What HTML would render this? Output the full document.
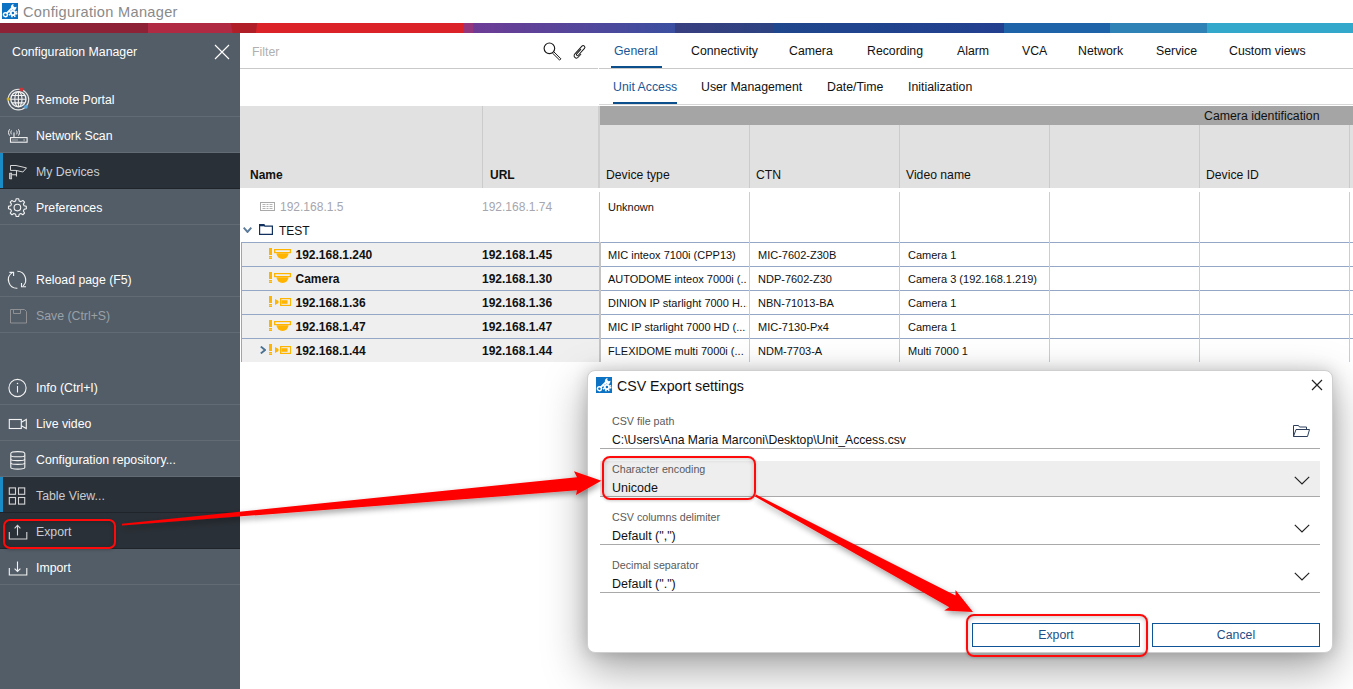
<!DOCTYPE html>
<html><head><meta charset="utf-8">
<style>
*{margin:0;padding:0;box-sizing:border-box}
html,body{width:1353px;height:689px;overflow:hidden;background:#fff;font-family:"Liberation Sans",sans-serif;position:relative}
.a{position:absolute;white-space:nowrap}
.t{position:absolute;white-space:nowrap;line-height:1}
/* sidebar */
#sb{position:absolute;left:0;top:33px;width:240px;height:656px;background:#535d67}
.row{position:absolute;left:0;width:240px;height:36px}
.row.sep{border-bottom:1px solid #626b74}
.row.sel{background:#2a3037;border-bottom:1px solid #1f242a}
.row.acc::before{content:"";position:absolute;left:0;top:0;width:3px;height:100%;background:#1b8bc6}
.row .lbl{position:absolute;left:36px;top:12px;font-size:12.3px;color:#fff;line-height:14px}
.row.sel .lbl{color:#c9cdd1}
.row .ic{position:absolute;left:6px;top:6px;width:24px;height:24px}
.tab{position:absolute;top:44px;font-size:12.3px;color:#111;line-height:14px}
.stab{position:absolute;top:80px;font-size:12.3px;color:#111;line-height:14px}
.hl{position:absolute;background:#c9c9c9;height:1px}
.hdr{position:absolute;font-size:12px;color:#111;line-height:14px}
.cell{position:absolute;font-size:11px;color:#111;line-height:13px}
</style></head><body>

<!-- title bar -->
<svg class="a" style="left:2px;top:3px" width="16" height="16" viewBox="0 0 16 16">
<rect width="16" height="16" fill="#0b72c4"/>
<path d="M4.6 10.3 L10.6 4.4" stroke="#fff" stroke-width="1.7"/>
<circle cx="3.4" cy="11.7" r="2" fill="none" stroke="#fff" stroke-width="1.4"/>
<path d="M9.4 5.6 A2.8 2.8 0 0 1 11.6 1.1 L11.2 2.9 L12.7 4.3 L14.5 3.8 A2.8 2.8 0 0 1 10.4 6.6z" fill="#fff"/>
<circle cx="10.9" cy="10" r="3.1" fill="#fff"/>
<circle cx="10.9" cy="10" r="3.8" fill="none" stroke="#fff" stroke-width="1.5" stroke-dasharray="1.5 1.56"/>
<circle cx="10.9" cy="10" r="1.2" fill="#0b72c4"/>
</svg>
<div class="t" style="left:23px;top:5px;font-size:14.6px;letter-spacing:.3px;color:#8a8a8a">Configuration Manager</div>

<!-- color bar -->
<svg class="a" style="left:0;top:23px" width="1353" height="10">
<defs>
<linearGradient id="g1" x1="0" x2="1"><stop offset="0" stop-color="#6d3c95"/><stop offset="1" stop-color="#3b4fa0"/></linearGradient>
<linearGradient id="g2" x1="0" x2="1"><stop offset="0" stop-color="#383f80"/><stop offset="1" stop-color="#2d4281"/></linearGradient><linearGradient id="g3" x1="0" x2="1"><stop offset="0" stop-color="#1f478d"/><stop offset="1" stop-color="#223f8f"/></linearGradient>
</defs>
<rect x="0" y="0" width="148" height="10" fill="#8d2136"/>
<rect x="148" y="0" width="86" height="10" fill="#b02a44"/>
<rect x="250" y="0" width="213" height="10" fill="#dc2229"/>
<polygon points="230.8,0 257.2,0 255.9,10 232.5,10" fill="#b01f28"/>
<rect x="463" y="0" width="10" height="10" fill="#93367e"/>
<rect x="473" y="0" width="202" height="10" fill="url(#g1)"/>
<rect x="675" y="0" width="99" height="10" fill="url(#g2)"/><rect x="774" y="0" width="230" height="10" fill="url(#g3)"/>
<rect x="1004" y="0" width="106" height="10" fill="#1e63a8"/>
<rect x="1110" y="0" width="97" height="10" fill="#2e82b6"/>
<rect x="1207" y="0" width="146" height="10" fill="#34a8ca"/>
</svg>

<!-- sidebar -->
<div id="sb">
  <div class="t" style="left:12px;top:13px;font-size:12.3px;color:#fff">Configuration Manager</div>
  <svg class="a" style="left:213.5px;top:11px" width="16" height="16"><path d="M1 1 L15 15 M15 1 L1 15" stroke="#fff" stroke-width="1.15"/></svg>

  <div class="row sep" style="top:48px"><svg class="ic" viewBox="0 0 24 24"><circle cx="12.4" cy="12.6" r="10.3" fill="none" stroke="#e6e6e6" stroke-width="1.1"/><circle cx="12.4" cy="12.2" r="7.6" fill="none" stroke="#f2f2f2" stroke-width="1.3"/><path d="M4.8 12.2h15.2M12.4 4.6v15.2M5.8 8.5h13.2M5.8 15.9h13.2" stroke="#f2f2f2" stroke-width="1.1"/><ellipse cx="12.4" cy="12.2" rx="3.6" ry="7.6" fill="none" stroke="#f2f2f2" stroke-width="1.1"/><circle cx="15.5" cy="2.6" r="2" fill="#c8363a"/><circle cx="2.3" cy="12.1" r="1.7" fill="#cfae1c"/><circle cx="19.9" cy="19.8" r="1.9" fill="#58a6dc"/></svg><div class="lbl">Remote Portal</div></div>
  <div class="row sep" style="top:84px"><svg class="ic" viewBox="0 0 24 24"><rect x="4.5" y="14.6" width="16.6" height="4.6" fill="none" stroke="#f2f2f2" stroke-width="1.1"/><path d="M6.5 17h1M8.5 17h1M10.5 17h1M17.5 17h1.2" stroke="#f2f2f2" stroke-width="1"/><path d="M8 14V9.5" stroke="#f2f2f2" stroke-width="1.1"/><path d="M5.5 7.5c-.8 1.2-.8 2.6 0 3.8M10.5 7.5c.8 1.2.8 2.6 0 3.8M3.6 6.3c-1.4 2-1.4 4.3 0 6.3M12.4 6.3c1.4 2 1.4 4.3 0 6.3" fill="none" stroke="#f2f2f2" stroke-width="1"/></svg><div class="lbl">Network Scan</div></div>
  <div class="row sel acc" style="top:120px"><svg class="ic" viewBox="0 0 24 24"><path d="M4.5 6.5h5.5l10.5 2.4-3.6 4.1-6.9-1.6H4.5z" fill="none" stroke="#d4d6d8" stroke-width="1"/><path d="M10.5 11.6v6M5.5 15.8h5M3.8 14v6" fill="none" stroke="#d4d6d8" stroke-width="1.1"/><rect x="4" y="14.2" width="1.6" height="5.6" fill="none" stroke="#d4d6d8" stroke-width=".9"/></svg><div class="lbl">My Devices</div></div>
  <div class="row sep" style="top:156px"><svg class="ic" viewBox="0 0 24 24"><path transform="translate(-.6 .6)" d="M10.80 3.08 L13.20 3.08 L13.77 5.33 L15.47 6.03 L17.46 4.85 L19.15 6.54 L17.97 8.53 L18.67 10.23 L20.92 10.80 L20.92 13.20 L18.67 13.77 L17.97 15.47 L19.15 17.46 L17.46 19.15 L15.47 17.97 L13.77 18.67 L13.20 20.92 L10.80 20.92 L10.23 18.67 L8.53 17.97 L6.54 19.15 L4.85 17.46 L6.03 15.47 L5.33 13.77 L3.08 13.20 L3.08 10.80 L5.33 10.23 L6.03 8.53 L4.85 6.54 L6.54 4.85 L8.53 6.03 L10.23 5.33z" fill="none" stroke="#f2f2f2" stroke-width="1.1" stroke-linejoin="round"/><circle cx="11.4" cy="12.6" r="3.3" fill="none" stroke="#f2f2f2" stroke-width="1.1"/></svg><div class="lbl">Preferences</div></div>

  <div class="row sep" style="top:228px"><svg class="ic" viewBox="0 0 24 24"><path d="M6.3 5.6A8.5 8.5 0 0 0 11.4 21.2M11.4 4.3A8.5 8.5 0 0 1 17.1 18.9" fill="none" stroke="#f2f2f2" stroke-width="1.1"/><path d="M3.4 5.4H7.6V8.9M15.5 16V19.7H20" fill="none" stroke="#f2f2f2" stroke-width="1.1"/></svg><div class="lbl">Reload page (F5)</div></div>
  <div class="row sep" style="top:264px"><svg class="ic" viewBox="0 0 24 24"><path d="M4.5 6.5h14l2 2v11.5h-16z" fill="none" stroke="#8e9094" stroke-width="1"/><path d="M7.5 6.5v4h7v-4" fill="none" stroke="#8e9094" stroke-width="1"/></svg><div class="lbl" style="color:#9aa1a8">Save (Ctrl+S)</div></div>

  <div class="row sep" style="top:336px"><svg class="ic" viewBox="0 0 24 24"><circle cx="11.5" cy="13" r="8.6" fill="none" stroke="#f2f2f2" stroke-width="1.1"/><path d="M11.5 11v6.5" stroke="#f2f2f2" stroke-width="1.1"/><circle cx="11.5" cy="8.6" r=".75" fill="#f2f2f2"/></svg><div class="lbl">Info (Ctrl+I)</div></div>
  <div class="row sep" style="top:372px"><svg class="ic" viewBox="0 0 24 24"><rect x="3.3" y="8.5" width="12" height="9" fill="none" stroke="#f2f2f2" stroke-width="1.1"/><path d="M15.3 11.2l5-2.7v9l-5-2.7" fill="none" stroke="#f2f2f2" stroke-width="1.1"/></svg><div class="lbl">Live video</div></div>
  <div class="row sep" style="top:408px"><svg class="ic" viewBox="0 0 24 24"><path d="M4.8 6.5c0-1.3 3-1.9 7-1.9s7 .6 7 1.9v14c0 1-3 1.6-7 1.6s-7-.6-7-1.6z" fill="none" stroke="#f2f2f2" stroke-width="1.1"/><path d="M4.8 8.4c0 .9 3 1.4 7 1.4s7-.5 7-1.4M4.8 12.2c0 .9 3 1.4 7 1.4s7-.5 7-1.4M4.8 16c0 .9 3 1.4 7 1.4s7-.5 7-1.4" fill="none" stroke="#f2f2f2" stroke-width="1.1"/></svg><div class="lbl">Configuration repository...</div></div>
  <div class="row sel acc" style="top:444px"><svg class="ic" viewBox="0 0 24 24"><rect x="3.3" y="4.9" width="6.2" height="6.4" fill="none" stroke="#d4d6d8" stroke-width="1.1"/><rect x="12.5" y="4.9" width="6.2" height="6.4" fill="none" stroke="#d4d6d8" stroke-width="1.1"/><rect x="3.3" y="14.5" width="6.2" height="6.6" fill="none" stroke="#d4d6d8" stroke-width="1.1"/><rect x="12.5" y="14.5" width="6.2" height="6.6" fill="none" stroke="#d4d6d8" stroke-width="1.1"/></svg><div class="lbl">Table View...</div></div>
  <div class="row sel" style="top:480px"><svg class="ic" viewBox="0 0 24 24"><path d="M3.3 18v7h17.5v-7" transform="translate(0 -5)" fill="none" stroke="#d4d6d8" stroke-width="1.1"/><path d="M11.5 6.5v10M8.6 9.3l2.9-2.9 2.9 2.9" fill="none" stroke="#d4d6d8" stroke-width="1.1"/></svg><div class="lbl">Export</div></div>
  <div class="row sep" style="top:516px"><svg class="ic" viewBox="0 0 24 24"><path d="M3.3 13v7h17.5v-7" fill="none" stroke="#f2f2f2" stroke-width="1.1"/><path d="M11.5 6.5v10M8.6 13.6l2.9 2.9 2.9-2.9" fill="none" stroke="#f2f2f2" stroke-width="1.1"/></svg><div class="lbl">Import</div></div>
</div>

<!-- toolbar -->
<div class="t" style="left:252px;top:46px;font-size:12.3px;color:#b0b0b0">Filter</div>
<svg class="a" style="left:540px;top:41px" width="50" height="22" viewBox="0 0 50 22">
<circle cx="9.4" cy="7.3" r="5.3" fill="none" stroke="#1a1a1a" stroke-width="1.15"/>
<path d="M13.6 10.6 L20.9 17.8 L19.6 19.1 L12.3 11.9" fill="none" stroke="#1a1a1a" stroke-width="1"/>
<path transform="translate(39.6 10.6) rotate(42)" d="M-0.6 -2.8 V3.6 A1.05 1.05 0 0 0 1.5 3.6 V-5.6 A1.7 1.7 0 0 0 -1.9 -5.6 V5.2 A2.3 2.3 0 0 0 2.7 5.2 V0.8" fill="none" stroke="#1a1a1a" stroke-width="1"/>
</svg>
<div class="hl" style="left:240px;top:68px;width:358px"></div>
<div class="hl" style="left:599px;top:68px;width:754px"></div>

<div class="tab" style="left:614px;color:#1a5796">General</div>
<div class="a" style="left:611px;top:66px;width:51px;height:2px;background:#0c4f8d"></div>
<div class="tab" style="left:691px">Connectivity</div>
<div class="tab" style="left:789px">Camera</div>
<div class="tab" style="left:867px">Recording</div>
<div class="tab" style="left:957px">Alarm</div>
<div class="tab" style="left:1022px">VCA</div>
<div class="tab" style="left:1078px">Network</div>
<div class="tab" style="left:1156px">Service</div>
<div class="tab" style="left:1229px">Custom views</div>

<div class="stab" style="left:613px;color:#1a5796">Unit Access</div>
<div class="a" style="left:613px;top:102px;width:64px;height:2px;background:#0c4f8d"></div>
<div class="stab" style="left:701px">User Management</div>
<div class="stab" style="left:827px">Date/Time</div>
<div class="stab" style="left:908px">Initialization</div>
<div class="hl" style="left:599px;top:104px;width:754px;background:#d6d6d6"></div>

<!-- table header -->
<div class="a" style="left:240px;top:106px;width:359px;height:82px;background:#e1e1e1"></div>
<div class="a" style="left:482px;top:106px;width:1px;height:82px;background:#cbcbcb"></div>
<div class="a" style="left:598px;top:106px;width:2px;height:82px;background:#cfcfcf"></div>
<div class="a" style="left:600px;top:106px;width:753px;height:19px;background:#a5a5a5"></div>
<div class="a" style="left:600px;top:125px;width:753px;height:63px;background:#e1e1e1"></div>
<div class="a" style="left:749px;top:125px;width:1px;height:63px;background:#cbcbcb"></div>
<div class="a" style="left:899px;top:125px;width:1px;height:63px;background:#cbcbcb"></div>
<div class="a" style="left:1049px;top:125px;width:1px;height:63px;background:#cbcbcb"></div>
<div class="a" style="left:1199px;top:125px;width:1px;height:63px;background:#cbcbcb"></div>
<div class="a" style="left:1349px;top:125px;width:1px;height:63px;background:#cbcbcb"></div>
<div class="hdr" style="left:1204px;top:109px;font-size:12.3px">Camera identification</div>
<div class="hdr" style="left:250px;top:168px;font-weight:bold">Name</div>
<div class="hdr" style="left:490px;top:168px;font-weight:bold">URL</div>
<div class="hdr" style="left:606px;top:168px;font-size:12.2px">Device type</div>
<div class="hdr" style="left:756px;top:168px;font-size:12.2px">CTN</div>
<div class="hdr" style="left:906px;top:168px;font-size:12.2px">Video name</div>
<div class="hdr" style="left:1206px;top:168px;font-size:12.2px">Device ID</div>

<!-- table body -->
<div id="tbody">
<svg class="a" style="left:260px;top:202px" width="15" height="9" viewBox="0 0 15 9"><rect x=".5" y=".5" width="14" height="8" fill="none" stroke="#a9a9a9"/><path d="M2.5 2.5h3M6.5 2.5h2M9.5 2.5h3M2.5 4.5h3M6.5 4.5h2M9.5 4.5h3M2.5 6.5h3M6.5 6.5h2M9.5 6.5h3" stroke="#b5b5b5"/></svg>
<div class="t" style="left:280px;top:201px;font-size:12px;color:#a6a6ae">192.168.1.5</div>
<div class="t" style="left:482px;top:201px;font-size:12px;color:#a6a6ae">192.168.1.74</div>
<div class="t" style="left:608px;top:202px;font-size:11px;color:#111">Unknown</div>
<div class="a" style="left:599px;top:192px;width:1px;height:50px;background:#cdcdcd"></div>
<div class="a" style="left:749px;top:192px;width:1px;height:50px;background:#cdcdcd"></div>
<div class="a" style="left:899px;top:192px;width:1px;height:50px;background:#cdcdcd"></div>
<div class="a" style="left:1049px;top:192px;width:1px;height:50px;background:#cdcdcd"></div>
<div class="a" style="left:1199px;top:192px;width:1px;height:50px;background:#cdcdcd"></div>
<div class="a" style="left:1349px;top:192px;width:1px;height:50px;background:#cdcdcd"></div>
<svg class="a" style="left:243px;top:227px" width="9" height="6" viewBox="0 0 9 6"><path d="M.7 .7L4.5 5 8.3 .7" fill="none" stroke="#5b7b9b" stroke-width="1.9"/></svg>
<svg class="a" style="left:259px;top:224px" width="14" height="11" viewBox="0 0 14 11"><path d="M.6 10.4V.6h4.4l.8 1.6h7.6v8.2z" fill="none" stroke="#11305e" stroke-width="1.2"/><rect x=".6" y=".5" width="4.6" height="1.8" fill="#11305e"/></svg>
<div class="t" style="left:279px;top:225px;font-size:12px;color:#111">TEST</div>
<div class="a" style="left:241px;top:242px;width:358px;height:120px;background:#efefef;border-left:1px solid #93a6c6"></div>
<div class="a" style="left:241px;top:242px;width:1112px;height:1px;background:#94a7c6"></div>
<svg class="a" style="left:269px;top:248px" width="3" height="11" viewBox="0 0 3 11"><rect x="0" y="0" width="3" height="7" fill="#ffb400"/><rect x="0" y="8" width="3" height="1.4" fill="#ffb400"/><rect x="0" y="9.6" width="3" height="1.4" fill="#ffb400"/></svg>
<svg class="a" style="left:274px;top:249px" width="17" height="11" viewBox="0 0 17 11"><rect x=".6" y=".6" width="15.8" height="3" fill="none" stroke="#ffb400" stroke-width="1.2"/><path d="M2.5 4.2h12a6 5.8 0 0 1 -12 0z" fill="#ffb400"/></svg>
<div class="t" style="left:295.5px;top:249px;font-size:12px;font-weight:bold;color:#111">192.168.1.240</div>
<div class="t" style="left:482px;top:249px;font-size:12px;font-weight:bold;color:#111">192.168.1.45</div>
<div class="t" style="left:608px;top:250px;width:139px;overflow:hidden;font-size:11px;color:#111">MIC inteox 7100i (CPP13)</div>
<div class="t" style="left:758px;top:250px;font-size:11px;color:#111">MIC-7602-Z30B</div>
<div class="t" style="left:908px;top:250px;font-size:11px;color:#111">Camera 1</div>
<div class="a" style="left:241px;top:266px;width:1112px;height:1px;background:#94a7c6"></div>
<svg class="a" style="left:269px;top:272px" width="3" height="11" viewBox="0 0 3 11"><rect x="0" y="0" width="3" height="7" fill="#ffb400"/><rect x="0" y="8" width="3" height="1.4" fill="#ffb400"/><rect x="0" y="9.6" width="3" height="1.4" fill="#ffb400"/></svg>
<svg class="a" style="left:274px;top:273px" width="17" height="11" viewBox="0 0 17 11"><rect x=".6" y=".6" width="15.8" height="3" fill="none" stroke="#ffb400" stroke-width="1.2"/><path d="M2.5 4.2h12a6 5.8 0 0 1 -12 0z" fill="#ffb400"/></svg>
<div class="t" style="left:295.5px;top:273px;font-size:12px;font-weight:bold;color:#111">Camera</div>
<div class="t" style="left:482px;top:273px;font-size:12px;font-weight:bold;color:#111">192.168.1.30</div>
<div class="t" style="left:608px;top:274px;width:139px;overflow:hidden;font-size:11px;color:#111">AUTODOME inteox 7000i (...</div>
<div class="t" style="left:758px;top:274px;font-size:11px;color:#111">NDP-7602-Z30</div>
<div class="t" style="left:908px;top:274px;font-size:11px;color:#111">Camera 3 (192.168.1.219)</div>
<div class="a" style="left:241px;top:290px;width:1112px;height:1px;background:#94a7c6"></div>
<svg class="a" style="left:269px;top:296px" width="3" height="11" viewBox="0 0 3 11"><rect x="0" y="0" width="3" height="7" fill="#ffb400"/><rect x="0" y="8" width="3" height="1.4" fill="#ffb400"/><rect x="0" y="9.6" width="3" height="1.4" fill="#ffb400"/></svg>
<svg class="a" style="left:275px;top:298px" width="16" height="8" viewBox="0 0 16 8"><path d="M0 1l3.5 2v2L0 7z" fill="#ffb400"/><rect x="5.6" y=".6" width="10" height="6.8" fill="none" stroke="#ffb400" stroke-width="1.2"/><rect x="6.5" y="2.2" width="6" height="3.6" fill="#ffb400"/></svg>
<div class="t" style="left:295.5px;top:297px;font-size:12px;font-weight:bold;color:#111">192.168.1.36</div>
<div class="t" style="left:482px;top:297px;font-size:12px;font-weight:bold;color:#111">192.168.1.36</div>
<div class="t" style="left:608px;top:298px;width:139px;overflow:hidden;font-size:11px;color:#111">DINION IP starlight 7000 H...</div>
<div class="t" style="left:758px;top:298px;font-size:11px;color:#111">NBN-71013-BA</div>
<div class="t" style="left:908px;top:298px;font-size:11px;color:#111">Camera 1</div>
<div class="a" style="left:241px;top:314px;width:1112px;height:1px;background:#94a7c6"></div>
<svg class="a" style="left:269px;top:320px" width="3" height="11" viewBox="0 0 3 11"><rect x="0" y="0" width="3" height="7" fill="#ffb400"/><rect x="0" y="8" width="3" height="1.4" fill="#ffb400"/><rect x="0" y="9.6" width="3" height="1.4" fill="#ffb400"/></svg>
<svg class="a" style="left:274px;top:321px" width="17" height="11" viewBox="0 0 17 11"><rect x=".6" y=".6" width="15.8" height="3" fill="none" stroke="#ffb400" stroke-width="1.2"/><path d="M2.5 4.2h12a6 5.8 0 0 1 -12 0z" fill="#ffb400"/></svg>
<div class="t" style="left:295.5px;top:321px;font-size:12px;font-weight:bold;color:#111">192.168.1.47</div>
<div class="t" style="left:482px;top:321px;font-size:12px;font-weight:bold;color:#111">192.168.1.47</div>
<div class="t" style="left:608px;top:322px;width:139px;overflow:hidden;font-size:11px;color:#111">MIC IP starlight 7000 HD (...</div>
<div class="t" style="left:758px;top:322px;font-size:11px;color:#111">MIC-7130-Px4</div>
<div class="t" style="left:908px;top:322px;font-size:11px;color:#111">Camera 1</div>
<div class="a" style="left:241px;top:338px;width:1112px;height:1px;background:#94a7c6"></div>
<svg class="a" style="left:269px;top:344px" width="3" height="11" viewBox="0 0 3 11"><rect x="0" y="0" width="3" height="7" fill="#ffb400"/><rect x="0" y="8" width="3" height="1.4" fill="#ffb400"/><rect x="0" y="9.6" width="3" height="1.4" fill="#ffb400"/></svg>
<svg class="a" style="left:275px;top:346px" width="16" height="8" viewBox="0 0 16 8"><path d="M0 1l3.5 2v2L0 7z" fill="#ffb400"/><rect x="5.6" y=".6" width="10" height="6.8" fill="none" stroke="#ffb400" stroke-width="1.2"/><rect x="6.5" y="2.2" width="6" height="3.6" fill="#ffb400"/></svg>
<svg class="a" style="left:260px;top:346px" width="6" height="8" viewBox="0 0 6 8"><path d="M.8 .6L5 4 .8 7.4" fill="none" stroke="#4b7190" stroke-width="1.9"/></svg>
<div class="t" style="left:295.5px;top:345px;font-size:12px;font-weight:bold;color:#111">192.168.1.44</div>
<div class="t" style="left:482px;top:345px;font-size:12px;font-weight:bold;color:#111">192.168.1.44</div>
<div class="t" style="left:608px;top:346px;width:139px;overflow:hidden;font-size:11px;color:#111">FLEXIDOME multi 7000i (...</div>
<div class="t" style="left:758px;top:346px;font-size:11px;color:#111">NDM-7703-A</div>
<div class="t" style="left:908px;top:346px;font-size:11px;color:#111">Multi 7000 1</div>
<div class="a" style="left:749px;top:242px;width:1px;height:120px;background:#c9ced6"></div>
<div class="a" style="left:899px;top:242px;width:1px;height:120px;background:#c9ced6"></div>
<div class="a" style="left:1049px;top:242px;width:1px;height:120px;background:#c9ced6"></div>
<div class="a" style="left:1199px;top:242px;width:1px;height:120px;background:#c9ced6"></div>
<div class="a" style="left:1349px;top:242px;width:1px;height:120px;background:#c9ced6"></div>
<div class="a" style="left:599px;top:242px;width:2px;height:120px;background:#c4c4c4"></div>

</div>

<!-- dialog -->
<div class="a" style="left:587px;top:370px;width:746px;height:283px;background:#fff;border:1px solid #cfcfcf;border-radius:8px;box-shadow:0 16px 44px rgba(0,0,0,.36),0 0 16px rgba(0,0,0,.16)"></div>
<svg class="a" style="left:596px;top:377px" width="16" height="16" viewBox="0 0 16 16">
<rect width="16" height="16" fill="#0b72c4"/>
<path d="M4.6 10.3 L10.6 4.4" stroke="#fff" stroke-width="1.7"/>
<circle cx="3.4" cy="11.7" r="2" fill="none" stroke="#fff" stroke-width="1.4"/>
<path d="M9.4 5.6 A2.8 2.8 0 0 1 11.6 1.1 L11.2 2.9 L12.7 4.3 L14.5 3.8 A2.8 2.8 0 0 1 10.4 6.6z" fill="#fff"/>
<circle cx="10.9" cy="10" r="3.1" fill="#fff"/>
<circle cx="10.9" cy="10" r="3.8" fill="none" stroke="#fff" stroke-width="1.5" stroke-dasharray="1.5 1.56"/>
<circle cx="10.9" cy="10" r="1.2" fill="#0b72c4"/>
</svg>
<div class="t" style="left:617px;top:379px;font-size:14.2px;color:#111">CSV Export settings</div>
<svg class="a" style="left:1311px;top:379px" width="12" height="12" viewBox="0 0 12 12"><path d="M1 1L11 11M11 1L1 11" stroke="#222" stroke-width="1.2"/></svg>

<div class="t" style="left:612px;top:416px;font-size:10.7px;color:#5a5a5a">CSV file path</div>
<div class="t" style="left:612px;top:434px;font-size:12.2px;color:#111">C:\Users\Ana Maria Marconi\Desktop\Unit_Access.csv</div>
<div class="a" style="left:600px;top:448px;width:720px;height:1px;background:#a9a9a9"></div>
<svg class="a" style="left:1292px;top:424px" width="19" height="14" viewBox="0 0 19 14"><path d="M1.5 12.5V1.5h5l1 1.5h7v2.5M1.5 12.5h14l2-7H4z" fill="none" stroke="#2c3e5c" stroke-width="1"/></svg>

<div class="a" style="left:600px;top:461px;width:720px;height:36px;background:#eeeeee;border-bottom:1px solid #a9a9a9"></div>
<div class="t" style="left:612px;top:464px;font-size:10.7px;color:#5a5a5a">Character encoding</div>
<div class="t" style="left:612px;top:482px;font-size:12.5px;color:#111">Unicode</div>
<svg class="a" style="left:1294px;top:476px" width="16" height="9" viewBox="0 0 16 9"><path d="M.8 .8L8 8 15.2 .8" fill="none" stroke="#222" stroke-width="1.2"/></svg>

<div class="t" style="left:612px;top:512px;font-size:10.7px;color:#5a5a5a">CSV columns delimiter</div>
<div class="t" style="left:612px;top:530px;font-size:12.5px;color:#111">Default (",")</div>
<div class="a" style="left:600px;top:544px;width:720px;height:1px;background:#a9a9a9"></div>
<svg class="a" style="left:1294px;top:524px" width="16" height="9" viewBox="0 0 16 9"><path d="M.8 .8L8 8 15.2 .8" fill="none" stroke="#222" stroke-width="1.2"/></svg>

<div class="t" style="left:612px;top:560px;font-size:10.7px;color:#5a5a5a">Decimal separator</div>
<div class="t" style="left:612px;top:578px;font-size:12.5px;color:#111">Default (".")</div>
<div class="a" style="left:600px;top:592px;width:720px;height:1px;background:#a9a9a9"></div>
<svg class="a" style="left:1294px;top:572px" width="16" height="9" viewBox="0 0 16 9"><path d="M.8 .8L8 8 15.2 .8" fill="none" stroke="#222" stroke-width="1.2"/></svg>

<div class="a" style="left:972px;top:623px;width:168px;height:24px;border:1px solid #0f5496;background:#fff"></div>
<div class="t" style="left:972px;top:629px;width:168px;text-align:center;font-size:12.3px;color:#1f4f86">Export</div>
<div class="a" style="left:1152px;top:623px;width:168px;height:24px;border:1px solid #0f5496;background:#fff"></div>
<div class="t" style="left:1152px;top:629px;width:168px;text-align:center;font-size:12.3px;color:#1f4f86">Cancel</div>

<!-- annotations -->
<div class="a" style="left:3px;top:519px;width:113px;height:30px;border:2px solid #ff0a0a;border-radius:7px;box-shadow:inset 0 1px 5px rgba(0,0,0,.22),0 1px 3px rgba(0,0,0,.2)"></div>
<div class="a" style="left:602px;top:456px;width:154px;height:44px;border:2px solid #ff0a0a;border-radius:8px;box-shadow:inset 0 1px 5px rgba(0,0,0,.22),0 1px 3px rgba(0,0,0,.2)"></div>
<div class="a" style="left:966px;top:614px;width:182px;height:43px;border:2px solid #ff0a0a;border-radius:8px;box-shadow:inset 0 1px 5px rgba(0,0,0,.22),0 1px 3px rgba(0,0,0,.2)"></div>
<svg class="a" style="left:0;top:0;overflow:visible" width="1353" height="689">
<defs><filter id="sh" x="-10%" y="-50%" width="120%" height="200%"><feGaussianBlur in="SourceAlpha" stdDeviation="3"/><feOffset dx="1" dy="3"/><feComponentTransfer><feFuncA type="linear" slope=".38"/></feComponentTransfer><feMerge><feMergeNode/><feMergeNode in="SourceGraphic"/></feMerge></filter></defs>
<g filter="url(#sh)" fill="#ff0000">
<polygon points="122,523.8 577,477.3 574,471.2 601.4,480.7 576,494.9 577,490.3 122,525.6"/>
<polygon points="756,494.6 955.5,595.4 955.5,590 973,612 944.2,610.5 949.3,607.2 755,496.6"/>
</g>
</svg>

</body></html>
